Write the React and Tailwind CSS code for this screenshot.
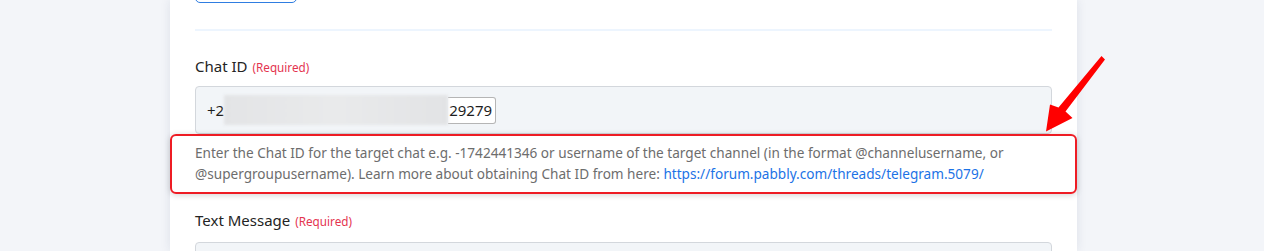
import React from 'react';

const Required = () => (
  <span className="ml-[5px] text-[11.7px] text-[#e4344f]">(Required)</span>
);

const PointerArrow = () => (
  // red annotation arrow pointing at the help text
  <svg
    className="absolute left-[1040px] top-[50px] pointer-events-none"
    width="72"
    height="88"
    viewBox="1040 50 72 88"
  >
    <path
      d="M1101.5,56 L1105,59.5 L1065.5,111.5 L1072.5,118 L1046,131.5 L1050,104.5 L1058.5,107.5 Z"
      fill="#ff0000"
    />
  </svg>
);

export default function App() {
  return (
    <div
      className="relative h-[251px] w-[1264px] overflow-hidden bg-[#f3f5f9]"
      style={{ fontFamily: '"Noto Sans", "Open Sans", sans-serif' }}
    >
      <div className="flow-root ml-[170px] w-[907px] h-full bg-white px-[25px] shadow-[0_0_10px_rgba(30,50,90,0.10)]">
        {/* previous field's button, scrolled mostly out of view */}
        <div className="-mt-[33px] h-[36px] w-[102px] rounded-[5px] border border-[#2f7de1]" />

        <div className="mt-[26px] border-t-2 border-[#edf5fe]" />

        {/* Chat ID */}
        <div className="mt-[25px] flex items-baseline text-[15px] leading-[20px] text-[#242424]">
          Chat ID <Required />
        </div>

        <div className="mt-[9px] flex h-[48px] items-center rounded-[4px] border border-[#d3d7dc] bg-[#f2f5f8] pl-[11px] text-[15px] text-[#1e1e1e]">
          <span>+2</span>
          <div className="relative flex items-center">
            <div className="h-[30px] w-[224px] bg-gradient-to-r from-[#e3e4e6] via-[#e9eaeb] to-[#e2e3e5] blur-[1.5px]" />
            <div className="flex h-[27px] items-center rounded-r-[3px] border border-l-0 border-[#b5b5b5] bg-white pr-[3px] pl-[1px]">
              29279
            </div>
          </div>
        </div>

        {/* help text, highlighted */}
        <div className="-mx-[25px] rounded-[6px] border-2 border-[#ee1c24] px-[23px] pt-[6px] pb-[8px] text-[13.6px] leading-[21px] text-[#6d6d6d] shadow-[0_1px_6px_rgba(0,0,0,0.18)]">
          Enter the Chat ID for the target chat e.g. -1742441346 or username of the target channel (in the format @channelusername, or
          <br />
          @supergroupusername). Learn more about obtaining Chat ID from here:{' '}
          <a href="#!" className="text-[#1c73e6]">
            https://forum.pabbly.com/threads/telegram.5079/
          </a>
        </div>

        {/* Text Message */}
        <div className="mt-[16px] flex items-baseline text-[15px] leading-[20px] text-[#242424]">
          Text Message <Required />
        </div>
        <div className="mt-[11px] h-[48px] rounded-[4px] border border-[#d3d7dc] bg-[#f2f5f8]" />
      </div>

      <PointerArrow />
    </div>
  );
}
